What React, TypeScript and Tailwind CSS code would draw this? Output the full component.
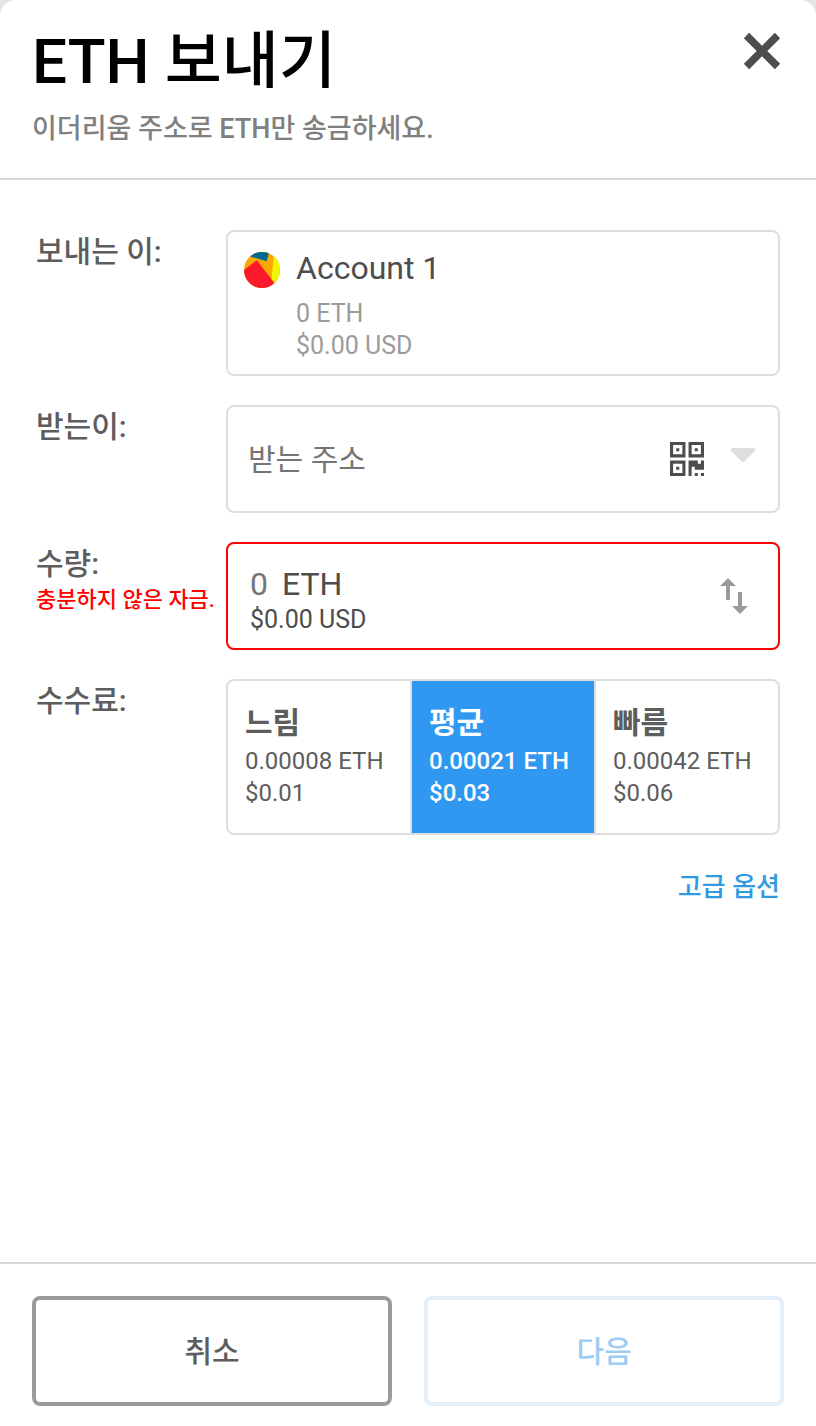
import { useState } from "react";

const fees = [
    { name: "느림", eth: "0.00008 ETH", usd: "$0.01" },
    { name: "평균", eth: "0.00021 ETH", usd: "$0.03" },
    { name: "빠름", eth: "0.00042 ETH", usd: "$0.06" },
];

function CloseIcon() {
    return (
        <svg width="38" height="38" viewBox="0 0 38 38" stroke="#4d4d4d" strokeWidth="7.5" aria-hidden="true">
            <path d="M3.5 3.5 34.5 34.5M34.5 3.5 3.5 34.5" />
        </svg>
    );
}

function Avatar() {
    return (
        <svg width="36" height="36" viewBox="0 0 36 36" aria-hidden="true">
            <clipPath id="avatar">
                <circle cx="18" cy="18" r="18" />
            </clipPath>
            <g clipPath="url(#avatar)">
                <rect width="36" height="36" fill="#fca803" />
                <path d="M30.3 0 26.5 36H36V0Z" fill="#f2f602" />
                <path d="M2 3.2 22.7 9.3 25 0V-3H2Z" fill="#03698c" />
                <path d="M12.7 8.3 -4 21V40H37.5Z" fill="#fb1a2c" />
            </g>
        </svg>
    );
}

function QrIcon() {
    return (
        <svg width="34" height="34" viewBox="0 0 11 11" fill="#4d4d4d" fillRule="evenodd" aria-hidden="true">
            <path d="M0 0h5v5H0zM1 1v3h3V1zM2 2h1v1H2z" />
            <path d="M6 0h5v5H6zM7 1v3h3V1zM8 2h1v1H8z" />
            <path d="M0 6h5v5H0zM1 7v3h3V7zM2 8h1v1H2z" />
            <path d="M6 6h3v1h1V6h1v3H8V8H7v3H6zM8 10h1v1H8zM10 10h1v1h-1z" />
        </svg>
    );
}

function SwapIcon() {
    return (
        <svg width="28" height="36" viewBox="0 0 28 36" fill="#9b9b9b" aria-hidden="true">
            <path d="M8 0 16 8H10V22H6V8H0Z" />
            <path d="M18 14H22V28H28L20 36 12 28H18Z" />
        </svg>
    );
}

function App() {
    const [selected, setSelected] = useState("평균");

    return (
        <div className="min-h-screen bg-[#e4e4e4] font-[Roboto,'Noto_Sans_CJK_KR',sans-serif]">
            <div className="flex min-h-screen flex-col rounded-t-2xl bg-white">
                <header className="flex items-start justify-between border-b-2 border-[#d2d8dd] pt-6 pr-[35px] pb-7 pl-8">
                    <div>
                        <h1 className="text-[62px] leading-[76px] font-medium text-black">ETH 보내기</h1>
                        <p className="mt-2 text-[27px] leading-[42px] font-medium text-[#808080]">이더리움 주소로 ETH만 송금하세요.</p>
                    </div>
                    <button type="button" aria-label="닫기" className="mt-2">
                        <CloseIcon />
                    </button>
                </header>

                <main className="flex-1 px-9 pt-[50px]">
                    <div className="grid grid-cols-[190px_1fr] gap-y-[29px] text-[30px] leading-10 text-[#5d5d5d]">
                        <div className="pt-[2px] font-medium">보내는 이:</div>
                        <div className="flex gap-4 rounded-lg border-2 border-[#dedede] p-4 pb-3">
                            <div className="pt-1">
                                <Avatar />
                            </div>
                            <div>
                                <div className="text-[32px] text-[#4d4d4d]">Account 1</div>
                                <div className="mt-[10px] text-[25px] leading-8 text-[#9b9b9b]">0 ETH</div>
                                <div className="text-[25px] leading-8 text-[#9b9b9b]">$0.00 USD</div>
                            </div>
                        </div>

                        <label htmlFor="recipient" className="pt-[2px] font-medium">받는이:</label>
                        <div className="flex h-[108px] items-center rounded-lg border-2 border-[#dedede] pr-[22px] pl-5">
                            <input id="recipient" placeholder="받는 주소" className="min-w-0 flex-1 pt-[2px] outline-none placeholder:text-[#757575]" />
                            <button type="button" aria-label="QR 코드 스캔">
                                <QrIcon />
                            </button>
                            <button type="button" aria-label="주소 목록" className="ml-[26px] pb-2">
                                <svg width="26" height="15" viewBox="0 0 26 15" fill="#dedede" aria-hidden="true">
                                    <path d="M2 0H24Q26.5 1 24.8 3L14.3 13.5Q13 14.8 11.7 13.5L1.2 3Q-.5 1 2 0Z" />
                                </svg>
                            </button>
                        </div>

                        <div className="pt-[2px] font-medium">
                            <label htmlFor="amount">수량:</label>
                            <div className="text-[22px] leading-8 whitespace-nowrap text-[#ff0000]">충분하지 않은 자금.</div>
                        </div>
                        <div className="flex h-[108px] items-center justify-between rounded-lg border-2 border-[#ff0000] pr-[30px] pl-[22px]">
                            <div className="pt-2 text-[#4d4d4d]">
                                <div className="flex text-[32px]">
                                    <input id="amount" placeholder="0" className="mr-3 w-5 outline-none placeholder:text-[#757575]" />
                                    ETH
                                </div>
                                <div className="text-[25px] leading-8">$0.00 USD</div>
                            </div>
                            <button type="button" aria-label="통화 전환">
                                <SwapIcon />
                            </button>
                        </div>

                        <div className="pt-[2px] font-medium">수수료:</div>
                        <div className="grid grid-cols-3 gap-[2px] overflow-hidden rounded-lg border-2 border-[#dedede] bg-[#dedede]">
                            {fees.map((fee) => (
                                <button
                                    key={fee.name}
                                    type="button"
                                    aria-pressed={selected === fee.name}
                                    onClick={() => setSelected(fee.name)}
                                    className={
                                        selected === fee.name
                                            ? "bg-[#3098f1] px-[17px] pt-5 pb-6 text-left font-medium text-white"
                                            : "bg-white px-[17px] pt-5 pb-6 text-left"
                                    }
                                >
                                    <div className="leading-11 font-bold">{fee.name}</div>
                                    <div className="text-2xl">{fee.eth}</div>
                                    <div className="text-2xl">{fee.usd}</div>
                                </button>
                            ))}
                        </div>
                    </div>
                    <div className="mt-8 text-right">
                        <a href="#" className="text-[26px] leading-10 font-medium text-[#2f9ae0]">고급 옵션</a>
                    </div>
                </main>

                <footer className="grid grid-cols-2 gap-8 border-t-2 border-[#d2d8dd] px-8 pt-8 pb-5 text-[30px] font-medium">
                    <button type="button" className="h-[110px] rounded-lg border-4 border-[#9b9b9b] text-[#5d5d5d]">
                        취소
                    </button>
                    <button type="button" disabled className="h-[110px] rounded-lg border-4 border-[#e3eef8] text-[#9dcdf1]">
                        다음
                    </button>
                </footer>
            </div>
        </div>
    );
}

export default App;
